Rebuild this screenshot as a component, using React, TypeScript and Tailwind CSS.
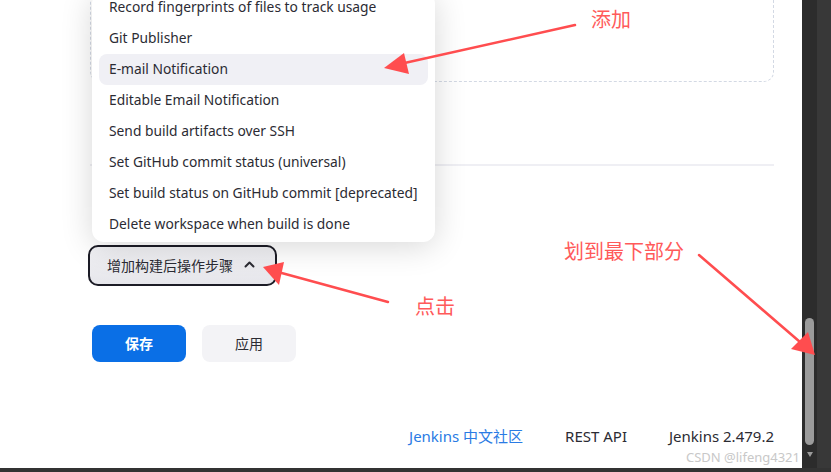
import React from 'react';

const items = [
  'Record fingerprints of files to track usage',
  'Git Publisher',
  'E-mail Notification',
  'Editable Email Notification',
  'Send build artifacts over SSH',
  'Set GitHub commit status (universal)',
  'Set build status on GitHub commit [deprecated]',
  'Delete workspace when build is done',
];

const RED = '#ff4d4f';

const Annotations: React.FC = () => (
  <>
    <svg className="absolute inset-0 pointer-events-none" width="831" height="472">
      <g stroke={RED} strokeWidth="2.5" strokeLinecap="round" fill={RED}>
        <line x1="575" y1="25" x2="400" y2="64" />
        <polygon points="384,68 404,53 409,74" stroke="none" />
        <line x1="699" y1="255" x2="800" y2="342" />
        <polygon points="815,355 791,349 808,332" stroke="none" />
        <line x1="388" y1="302" x2="278" y2="272" />
        <polygon points="263,267 284,262 279,285" stroke="none" />
      </g>
    </svg>
    <span className="absolute left-[591px] top-[6px] text-[20px] leading-[28px] text-[#ff5a5a]">添加</span>
    <span className="absolute left-[564px] top-[238px] text-[20px] leading-[28px] text-[#ff5a5a]">划到最下部分</span>
    <span className="absolute left-[415px] top-[293px] text-[20px] leading-[28px] text-[#ff5a5a]">点击</span>
  </>
);

const App: React.FC = () => {
  return (
    <div className="relative w-[831px] h-[472px] overflow-hidden bg-[#333] flex flex-col font-['Noto_Sans','Noto_Sans_CJK_SC',sans-serif]">
      <div className="flex flex-1 min-h-0">
        <main className="relative flex-1 bg-white pl-[90px] pr-[28px] flex flex-col">
          <div className="-mt-[30px] h-[112px] shrink-0 border-[1.5px] border-dashed border-[#d3d9e4] rounded-[10px]" />
          <div className="mt-[82px] h-[2px] shrink-0 bg-[#efeff4]" />

          <div className="mt-[79px] shrink-0">
            <button className="h-[41px] w-[189px] -ml-[2px] flex items-center gap-[11px] pl-[17px] rounded-[10px] border-[2.5px] border-[#1c1c26] bg-gradient-to-b from-[#f2f2f5] to-[#e6e6eb] text-[14px] text-[#2b2b33]">
              增加构建后操作步骤
              <svg width="11" height="7" viewBox="0 0 11 7" fill="none" className="mt-[-2px]">
                <path d="M1.5 5.5 L5.5 1.5 L9.5 5.5" stroke="#2b2b33" strokeWidth="2" strokeLinecap="round" strokeLinejoin="round" />
              </svg>
            </button>
          </div>

          <div className="mt-[39px] flex gap-[16px] shrink-0">
            <button className="h-[37px] w-[94px] ml-[2px] rounded-[8px] bg-[#0a6fe6] text-white text-[14px] font-bold">保存</button>
            <button className="h-[37px] w-[94px] rounded-[8px] bg-[#f3f3f6] text-[#2b2b33] text-[14px]">应用</button>
          </div>

          <footer className="mt-[64px] flex justify-end gap-[42px] text-[15px] leading-[20px] text-[#2b2b33]">
            <a className="text-[#2a7be4]">Jenkins 中文社区</a>
            <span>REST API</span>
            <span>Jenkins 2.479.2</span>
          </footer>

          <div className="absolute left-[92px] top-[-8px] w-[343px] pb-[2px] bg-white rounded-[12px] shadow-[0_4px_32px_rgba(0,0,0,0.16)] flex flex-col">
            {items.map((t, i) => (
              <div
                key={t}
                className={
                  'h-[31px] mx-[7px] pl-[10px] flex items-center rounded-[8px] text-[13.8px] text-[#2b2b33] whitespace-nowrap ' +
                  (i === 2 ? 'bg-[#f0f0f5]' : '')
                }
              >
                {t}
              </div>
            ))}
          </div>

          <span className="absolute right-[2px] bottom-[2px] text-[13px] leading-[18px] text-[#c8c8c8]">CSDN @lifeng4321</span>
        </main>

        <aside className="w-[29px] flex">
          <div className="w-[15px] bg-[#2c2c2c] relative">
            <div className="absolute left-[3px] top-[318px] w-[9px] h-[127px] rounded-full bg-[#9b9b9b]" />
            <div className="absolute left-[5px] top-[452px] w-0 h-0 border-l-[3px] border-r-[3px] border-t-[5px] border-l-transparent border-r-transparent border-t-[#9b9b9b]" />
          </div>
          <div className="flex-1 bg-[#383838]" />
        </aside>
      </div>
      <div className="h-[4px] bg-[#333]" />
      <Annotations />
    </div>
  );
};

export default App;
